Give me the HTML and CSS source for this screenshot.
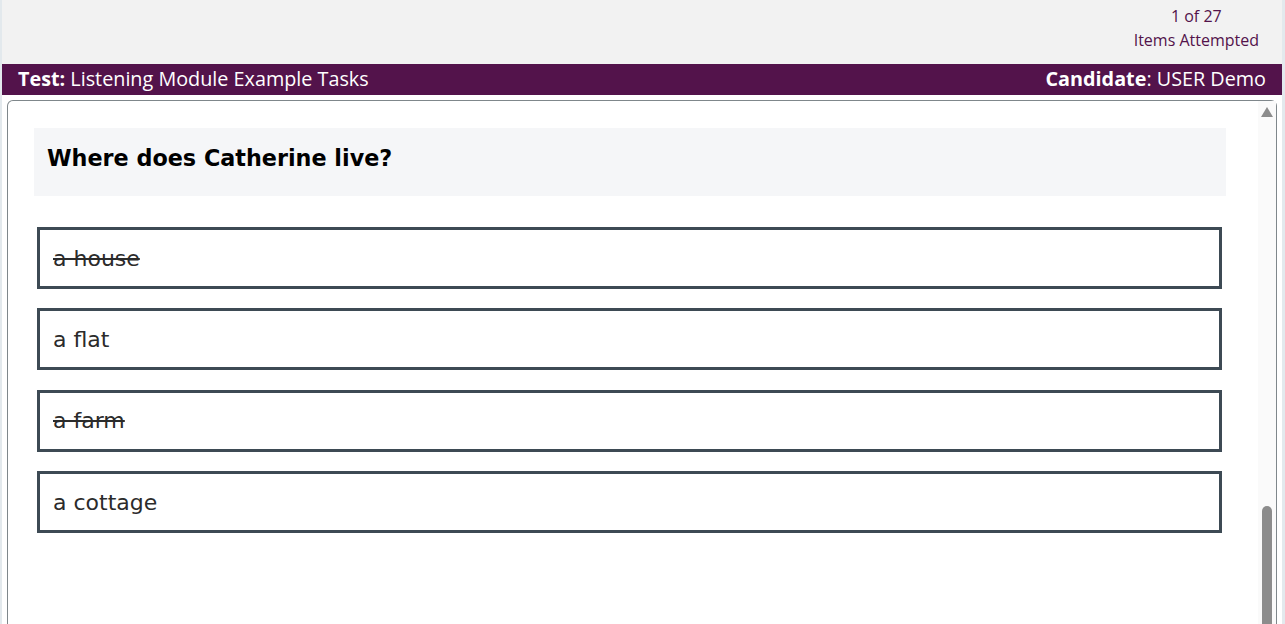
FILE: index.html
```html
<!DOCTYPE html>
<html lang="en">
<head>
<meta charset="utf-8">
<title>Listening Module Example Tasks</title>
<link rel="stylesheet" href="styles.css">
</head>
<body>
<div class="shell">
  <header class="topbar">
    <div class="progress">
      <div>1 of 27</div>
      <div>Items Attempted</div>
    </div>
  </header>
  <div class="titlebar">
    <div><b>Test:</b> Listening Module Example Tasks</div>
    <div><b>Candidate</b>: USER Demo</div>
  </div>
  <div class="body">
    <div class="panel">
      <div class="content">
        <div class="question">Where does Catherine live?</div>
        <div class="options">
          <div class="option struck">a house</div>
          <div class="option">a flat</div>
          <div class="option struck">a farm</div>
          <div class="option">a cottage</div>
        </div>
      </div>
      <div class="scrollbar">
        <div class="arrow"></div>
        <div class="track"></div>
        <div class="thumb"></div>
      </div>
    </div>
  </div>
</div>
</body>
</html>
```

FILE: styles.css
```css
html, body {
  margin: 0;
  padding: 0;
  height: 100%;
  overflow: hidden;
}
body {
  background: #e3e9ed;
  font-family: "Open Sans", "Liberation Sans", sans-serif;
}
.shell {
  margin: 0 3px 0 2px;
  height: 100%;
  display: flex;
  flex-direction: column;
  background: #ffffff;
}
.topbar {
  background: #f2f2f2;
  height: 64px;
  box-sizing: border-box;
  padding: 4px 23px 0 0;
  display: flex;
  justify-content: flex-end;
}
.progress {
  text-align: center;
  color: #53134b;
  font-size: 16px;
  line-height: 24px;
}
.titlebar {
  background: #53134b;
  color: #ffffff;
  height: 31px;
  box-sizing: border-box;
  padding: 0 16px 2px 16px;
  display: flex;
  justify-content: space-between;
  align-items: center;
  font-size: 19.8px;
}
.titlebar b {
  font-weight: 700;
}
.body {
  flex: 1;
  padding: 5px 5px 0 5px;
  display: flex;
  min-height: 0;
}
.panel {
  flex: 1;
  border: 1px solid #7f878b;
  border-bottom: none;
  border-radius: 6px 6px 0 0;
  display: flex;
  min-height: 0;
}
.content {
  flex: 1;
  padding: 27px 32px 0 26px;
}
.question {
  background: #f5f6f8;
  height: 68px;
  box-sizing: border-box;
  padding: 17px 13px 0 13px;
  font-family: "DejaVu Sans", Verdana, sans-serif;
  font-weight: 700;
  font-size: 22.3px;
  color: #000000;
}
.options {
  margin: 31px 4px 0 3px;
  display: flex;
  flex-direction: column;
  gap: 19.4px;
}
.option {
  height: 62px;
  box-sizing: border-box;
  border: 3px solid #3d4a54;
  padding: 0 13px;
  display: flex;
  align-items: center;
  font-family: "DejaVu Sans", Verdana, sans-serif;
  font-size: 22px;
  color: #2b2b2b;
}
.struck {
  text-decoration: line-through;
  text-decoration-thickness: 2px;
}
.scrollbar {
  width: 18px;
  background: #fafafa;
  display: flex;
  flex-direction: column;
  align-items: center;
}
.arrow {
  margin-top: 6px;
  width: 0;
  height: 0;
  border-left: 6px solid transparent;
  border-right: 6px solid transparent;
  border-bottom: 10px solid #8c8c8c;
}
.track {
  height: 389px;
}
.thumb {
  width: 10px;
  flex: 1;
  background: #8c8c8c;
  border-radius: 5px 5px 0 0;
}
```
